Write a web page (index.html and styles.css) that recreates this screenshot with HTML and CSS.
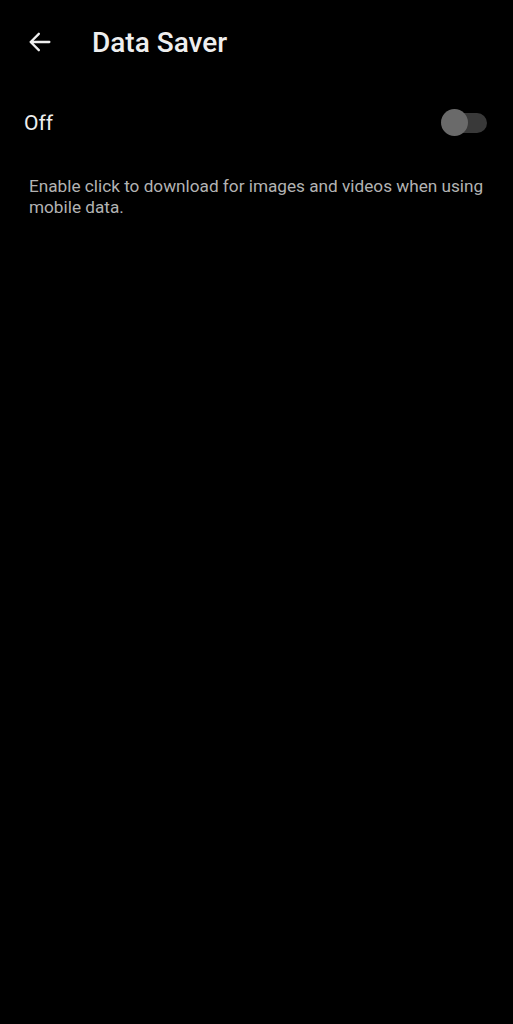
FILE: index.html
```html
<!DOCTYPE html>
<html lang="en">
<head>
    <meta charset="UTF-8">
    <meta name="viewport" content="width=device-width, initial-scale=1.0">
    <title>Data Saver</title>
    <link rel="stylesheet" href="styles.css">
</head>
<body>
    <div class="app-bar">
        <a class="back-btn" href="#">
            <svg width="28" height="28" viewBox="0 0 24 24">
                <path d="M20 12H4M11 5l-7 7 7 7" fill="none" stroke="#eee" stroke-width="2" stroke-linecap="round" stroke-linejoin="round"/>
            </svg>
        </a>
        <h1 class="title">Data Saver</h1>
    </div>
    <div class="switch-row">
        <span class="switch-label">Off</span>
        <span class="switch">
            <span class="switch-track"></span>
            <span class="switch-thumb"></span>
        </span>
    </div>
    <p class="desc">Enable click to download for images and videos when using mobile data.</p>
</body>
</html>
```
FILE: styles.css
```css
html, body{
    background: #000;
}
body{
    margin: 0;
    font-family: Roboto, "Noto Sans", sans-serif;
    color: #eee;
}
.app-bar{
    display: flex;
    align-items: center;
    height: 84px;
    padding-left: 26px;
}
.back-btn{
    display: flex;
    width: 28px;
    height: 28px;
}
.title{
    margin: 0 0 0 38px;
    font-size: 28px;
    font-weight: 500;
    color: #eee;
}
.switch-row{
    display: flex;
    align-items: center;
    justify-content: space-between;
    height: 78px;
    padding: 0 26px 0 24px;
}
.switch-label{
    font-size: 21px;
    color: #eee;
}
.switch{
    position: relative;
    width: 46px;
    height: 28px;
    display: flex;
    align-items: center;
}
.switch-track{
    display: block;
    width: 44px;
    height: 20px;
    margin-left: 2px;
    border-radius: 10px;
    background: #393939;
}
.switch-thumb{
    position: absolute;
    left: 0;
    top: 0;
    width: 27px;
    height: 27px;
    border-radius: 50%;
    background: #6a6a6a;
}
.desc{
    margin: 14px 26px 0 29px;
    font-size: 17.2px;
    line-height: 21px;
    color: #b3b3b3;
}
```
